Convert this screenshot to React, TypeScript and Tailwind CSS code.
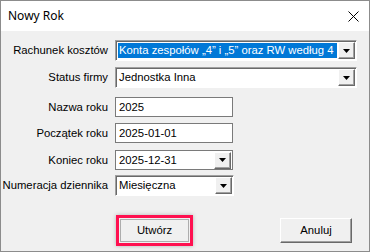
import React from 'react';

function Arrow() {
  return (
    <div className="w-[17px] h-[17px] shrink-0 bg-[#f0f0f0] border border-t-white border-l-white border-r-[#696969] border-b-[#696969] shadow-[inset_-1px_-1px_0_#a0a0a0] flex items-center justify-center">
      <svg width="7" height="4" viewBox="0 0 7 4">
        <path d="M0 0h7L3.5 4z" fill="#000" />
      </svg>
    </div>
  );
}

function Combo({ value, width, selected }: { value: string; width: string; selected?: boolean }) {
  return (
    <div className={`${width} h-[21px] bg-white border border-t-[#a0a0a0] border-l-[#a0a0a0] border-r-white border-b-white shadow-[inset_1px_1px_0_#696969] flex items-center pl-[2px] pr-[1px]`}>
      <div className={`flex-1 h-[15px] flex items-center px-[1px] mr-[1px] whitespace-nowrap overflow-hidden ${selected ? 'bg-[#0078d7] text-white' : 'text-black'}`}>
        {value}
      </div>
      <Arrow />
    </div>
  );
}

function TextBox({ value }: { value: string }) {
  return (
    <div className="w-[118px] h-[20px] bg-white border border-[#7a7a7a] flex items-center px-[3px] text-black">
      {value}
    </div>
  );
}

function Row({ label, children, mt }: { label: string; children: React.ReactNode; mt: string }) {
  return (
    <div className={`flex items-center ${mt}`}>
      <div className="w-[107px] text-right whitespace-nowrap text-black">{label}</div>
      <div className="ml-[7px]">{children}</div>
    </div>
  );
}

export default function App() {
  return (
    <div className="w-[370px] h-[252px] bg-[#f0f0f0] border border-[#8c8c8c] flex flex-col overflow-hidden" style={{ fontFamily: '"Liberation Sans", Arial, sans-serif' }}>
      <div className="h-[30px] bg-white flex items-center justify-between pl-[7px] pr-[10px] shrink-0">
        <span className="text-[12px] text-black" style={{ fontFamily: '"Noto Sans", "Open Sans", sans-serif' }}>Nowy Rok</span>
        <svg width="11" height="11" viewBox="0 0 11 11">
          <path d="M0.5 0.5L10.5 10.5M10.5 0.5L0.5 10.5" stroke="#000" strokeWidth="1" />
        </svg>
      </div>
      <div className="flex flex-col text-[11.3px] pt-[9px]">
        <Row label="Rachunek kosztów" mt="mt-0">
          <Combo value="Konta zespołów „4” i „5” oraz RW według 4" width="w-[242px]" selected />
        </Row>
        <Row label="Status firmy" mt="mt-[6px]">
          <Combo value="Jednostka Inna" width="w-[242px]" />
        </Row>
        <Row label="Nazwa roku" mt="mt-[9px]">
          <TextBox value="2025" />
        </Row>
        <Row label="Początek roku" mt="mt-[6px]">
          <TextBox value="2025-01-01" />
        </Row>
        <Row label="Koniec roku" mt="mt-[7px]">
          <div className="w-[118px] h-[20px] bg-white border border-[#7a7a7a] flex items-center pl-[3px] pr-[1px]">
            <span className="flex-1 text-black">2025-12-31</span>
            <Arrow />
          </div>
        </Row>
        <Row label="Numeracja dziennika" mt="mt-[5px]">
          <Combo value="Miesięczna" width="w-[119px]" />
        </Row>
        <div className="flex items-center justify-between mt-[19px] pl-[115px] pr-[17px]">
          <div className="border-[3px] border-[#ff1050] p-[1px] shadow-[0_0_4px_rgba(0,0,0,0.25)]">
            <div className="w-[69px] h-[23px] bg-[#f0f0f0] border border-[#adadad] flex items-center justify-center text-black">Utwórz</div>
          </div>
          <div className="w-[72px] h-[25px] bg-[#f0f0f0] border border-t-white border-l-white border-r-[#696969] border-b-[#696969] shadow-[inset_-1px_-1px_0_#a0a0a0] flex items-center justify-center text-black">Anuluj</div>
        </div>
      </div>
    </div>
  );
}
